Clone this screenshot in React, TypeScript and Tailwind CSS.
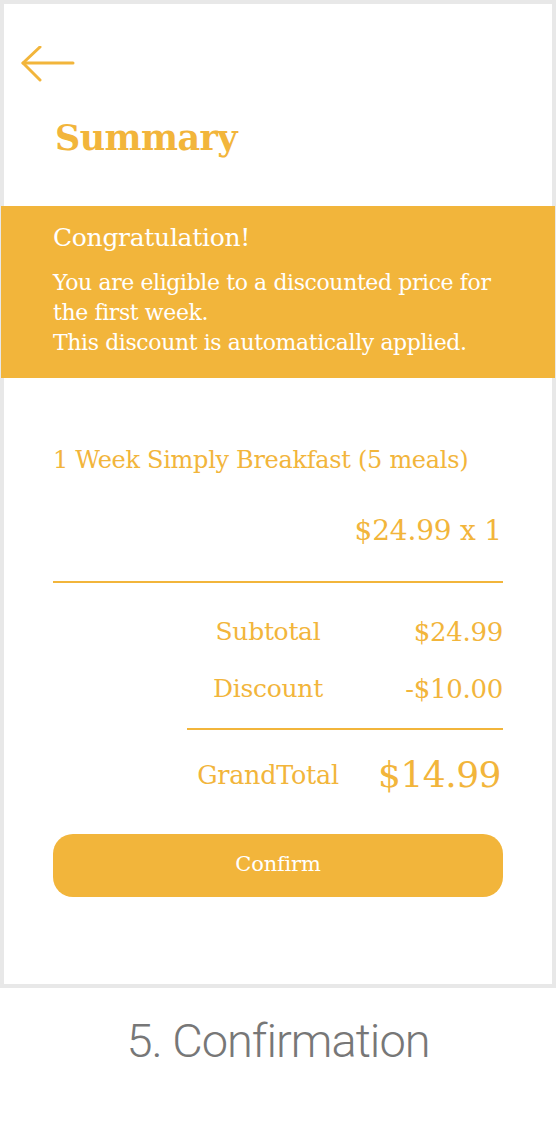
import React from "react";

const slab = { fontFamily: '"DejaVu Serif", "Liberation Serif", serif' };

export default function App() {
  return (
    <div className="w-[556px] h-[1138px] bg-white overflow-hidden">
      <div className="h-[988px] border-4 border-[#e8e8e8] flex flex-col text-[#f2b53b]" style={slab}>
        <div className="pl-[17px] pt-[42px] h-[82px]">
          <svg width="54" height="38" viewBox="0 0 54 38" fill="none" stroke="#f2b53b" strokeWidth="3" strokeLinecap="round" strokeLinejoin="round">
            <path d="M52 17H2" />
            <path d="M19 1L2 17L19 34" />
          </svg>
        </div>
        <div className="px-[49px] h-[120px] pt-[32px]">
          <h1 className="text-[35px] leading-[40px] font-bold tracking-[-0.6px] pl-[2px]">Summary</h1>
        </div>
        <div className="-mx-[3px] bg-[#f2b53b] h-[172px] pl-[52px] pr-[10px] pt-[17px] text-white">
          <div className="text-[25px] leading-[30px] tracking-[-0.3px]">Congratulation!</div>
          <div className="mt-[15px] text-[22px] leading-[30px] tracking-[-0.4px]">
            You are eligible to a discounted price for
            <br />
            the first week.
            <br />
            This discount is automatically applied.
          </div>
        </div>
        <div className="px-[49px] pt-[66px]">
          <div className="text-[24px] leading-[32px] tracking-[-0.3px]">1 Week Simply Breakfast (5 meals)</div>
          <div className="mt-[39px] text-right text-[28px] leading-[32px] pr-[1px] tracking-[-0.2px]">$24.99 x 1</div>
          <div className="mt-[34px] h-[2px] bg-[#f2b53b]" />
          <div className="ml-auto w-[316px]">
            <div className="grid grid-cols-[162px_1fr] tracking-[-0.3px]">
              <div className="text-center h-[57px] pt-[34px] leading-[30px] text-[25px]">Subtotal</div>
              <div className="text-right h-[57px] pt-[34px] leading-[30px] text-[26px]">$24.99</div>
              <div className="text-center h-[57px] pt-[34px] leading-[30px] text-[25px]">Discount</div>
              <div className="text-right h-[57px] pt-[34px] leading-[30px] text-[26px]">-$10.00</div>
            </div>
            <div className="mt-[31px] h-[1.5px] bg-[#f2b53b]" />
            <div className="grid grid-cols-[162px_1fr] items-center h-[92px] pb-[1px]">
              <div className="text-center text-[25.5px] tracking-[-0.3px]">GrandTotal</div>
              <div className="text-right text-[36px] tracking-[-0.5px] pr-[2px]">$14.99</div>
            </div>
          </div>
          <button className="mt-[12px] w-full h-[63px] rounded-[20px] bg-[#f2b53b] text-white text-[21px] font-normal tracking-[-0.2px]" style={slab}>
            Confirm
          </button>
        </div>
      </div>
      <div
        className="text-center text-[#777777] text-[47px] font-light tracking-[-1px] mt-[25px] leading-[56px]"
        style={{ fontFamily: '"Roboto", "Liberation Sans", sans-serif' }}
      >
        5. Confirmation
      </div>
    </div>
  );
}
